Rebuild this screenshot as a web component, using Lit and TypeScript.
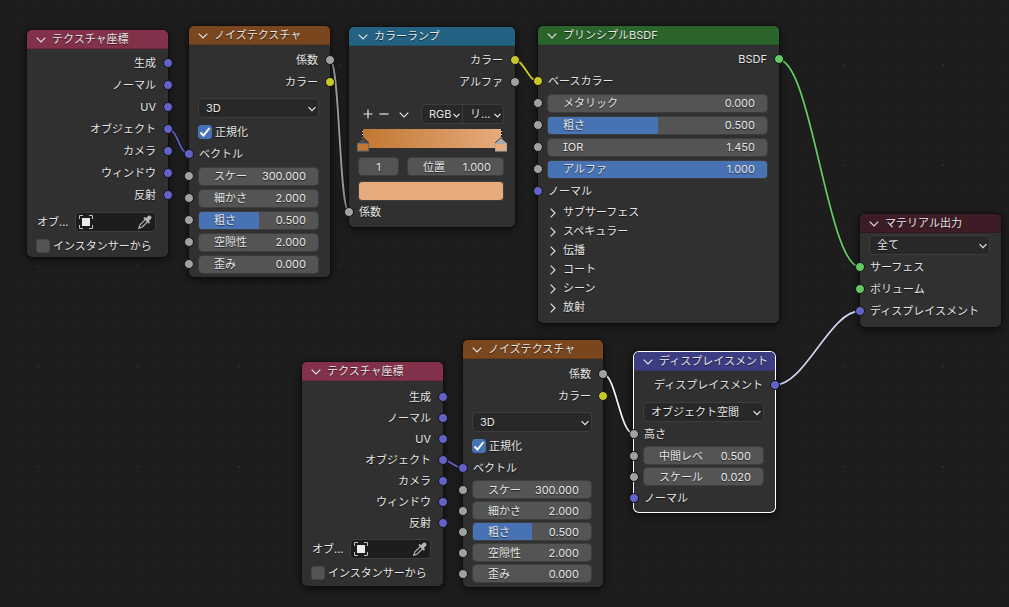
import { LitElement, html, svg, css } from "lit";
import { customElement, property } from "lit/decorators.js";

type Kind = "vector" | "value" | "color" | "shader";

const chevronDown = html`<svg class="chev" viewBox="0 0 10 10" aria-hidden="true"><path d="M.7 2.700L5 7l4.300-4.300" fill="none" stroke="currentColor" stroke-width="1.1" /></svg>`;
const chevronRight = html`<svg class="chev" viewBox="0 0 10 10" aria-hidden="true"><path d="M2.700.7L7 5 2.700 9.300" fill="none" stroke="currentColor" stroke-width="1.1" /></svg>`;

const shared = css`
  * { box-sizing: border-box; }
  :host {
    font-family: Inter, "Noto Sans CJK JP", sans-serif;
    font-feature-settings: "cv08";
    font-size: 11px;
    line-height: 16px;
    color: #e6e6e6;
    text-shadow: 0 1px 1px rgba(0, 0, 0, 0.6);
  }
  button, input, select {
    font: inherit;
    font-feature-settings: inherit;
    color: inherit;
    text-shadow: inherit;
    margin: 0;
    padding: 0;
    border: 0;
    background: none;
    min-width: 0;
    outline-offset: 1px;
  }
  .chev { width: 10px; height: 10px; flex: none; }
`;

@customElement("node-socket")
class NodeSocket extends LitElement {
  @property() kind: Kind = "value";
  @property() side: "in" | "out" = "in";
  static styles = css`
    .dot {
      position: absolute;
      top: 50%;
      width: 10px;
      height: 10px;
      margin: -5px;
      box-sizing: border-box;
      border: 1px solid #121212;
      border-radius: 50%;
    }
    .in { left: 0; }
    .out { right: 0; }
    .vector { background: #6363c7; }
    .value { background: #a1a1a1; }
    .color { background: #c7c729; }
    .shader { background: #63c763; }
  `;
  render() {
    return html`<span class="dot ${this.kind} ${this.side}"></span>`;
  }
}

@customElement("node-row")
class NodeRow extends LitElement {
  @property() label = "";
  @property() kind: Kind = "value";
  @property() side: "in" | "out" = "in";
  static styles = [shared, css`
    :host { display: block; }
    .row {
      position: relative;
      display: flex;
      align-items: center;
      height: var(--label-row, 22px);
      padding: 0 12px 0 10px;
    }
    .out { justify-content: flex-end; }
  `];
  render() {
    return html`<div class="row ${this.side}">
      <span>${this.label}</span>
      <node-socket .kind=${this.kind} .side=${this.side}></node-socket>
    </div>`;
  }
}

@customElement("node-field")
class NodeField extends LitElement {
  @property() label = "";
  @property() value = "";
  @property({ type: Number }) fill = 0;
  static styles = [shared, css`
    :host { display: block; }
    .row {
      position: relative;
      display: flex;
      align-items: center;
      height: var(--field-row, 22px);
      padding: 0 11px 0 9px;
    }
    .field {
      position: relative;
      flex: 1;
      min-width: 0;
      display: flex;
      align-items: center;
      height: 19px;
      padding: 0 12px 0 15px;
      border: 1px solid #3d3d3d;
      border-radius: 4px;
      background: #545454;
      background-clip: padding-box;
      overflow: hidden;
    }
    .bar { position: absolute; left: 0; top: 0; bottom: 0; background: #4772b3; }
    .name { position: relative; white-space: nowrap; }
    .value { position: relative; flex: 1; width: 0; text-align: right; }
  `];
  render() {
    return html`<div class="row">
      <label class="field">
        <span class="bar" style="width:${this.fill * 100}%"></span>
        <span class="name">${this.label}</span>
        <input class="value" type="text" inputmode="decimal" .value=${this.value} />
      </label>
      <node-socket kind="value" side="in"></node-socket>
    </div>`;
  }
}

@customElement("node-select")
class NodeSelect extends LitElement {
  @property() label = "";
  @property() value = "";
  static styles = [shared, css`
    :host { display: block; }
    .row { display: flex; align-items: center; height: 22px; padding: 0 11px 0 9px; }
    .box {
      flex: 1;
      min-width: 0;
      height: 20px;
      display: grid;
      align-items: center;
      border: 1px solid #3d3d3d;
      border-radius: 4px;
      background: #282828;
    }
    select {
      grid-area: 1 / 1;
      appearance: none;
      width: 100%;
      height: 18px;
      padding: 0 16px 0 7px;
    }
    .chev { grid-area: 1 / 1; justify-self: end; width: 8px; height: 8px; margin: 2px 2px 0 0; pointer-events: none; }
    .chev path { stroke-width: 1.6; }
  `];
  render() {
    return html`<div class="row"><span class="box">
      <select aria-label=${this.label}><option>${this.value}</option></select>${chevronDown}
    </span></div>`;
  }
}

@customElement("node-check")
class NodeCheck extends LitElement {
  @property() label = "";
  @property({ type: Boolean }) checked = false;
  static styles = [shared, css`
    :host { display: block; }
    .row { display: flex; align-items: center; gap: 3px; height: 22px; padding: 0 9px; white-space: nowrap; }
    .tick { display: grid; }
    input {
      grid-area: 1 / 1;
      appearance: none;
      width: 14px;
      height: 14px;
      border: 1px solid #464646;
      border-radius: 3px;
      background: #545454;
    }
    input:checked { background: #4772b3; border-color: #4772b3; }
    svg { grid-area: 1 / 1; width: 14px; height: 14px; visibility: hidden; pointer-events: none; }
    input:checked + svg { visibility: visible; }
  `];
  render() {
    return html`<label class="row">
      <span class="tick">
        <input type="checkbox" .checked=${this.checked} />
        <svg viewBox="0 0 14 14" aria-hidden="true"><path d="M2.500 7.500l3 3 6-7.500" fill="none" stroke="#fff" stroke-width="2" /></svg>
      </span>
      <span>${this.label}</span>
    </label>`;
  }
}

@customElement("graph-node")
class GraphNode extends LitElement {
  @property() label = "";
  @property() tone = "";
  @property({ type: Boolean }) selected = false;
  static styles = [shared, css`
    :host { display: block; }
    .node {
      border-radius: 5px;
      background: #303030;
      box-shadow: 0 0 0 1px rgba(14, 14, 14, 0.6), 0 2px 8px 1px rgba(0, 0, 0, 0.6);
    }
    .selected { box-shadow: 0 0 0 1px #fff, 0 2px 8px 2px rgba(0, 0, 0, 0.6); }
    header {
      display: flex;
      align-items: flex-start;
      height: 19px;
      border-radius: 5px 5px 0 0;
      box-shadow: inset 0 -1px rgba(0, 0, 0, 0.15);
    }
    .input { background: #83314a; }
    .texture { background: #79461d; }
    .converter { background: #246283; }
    .shader { background: #2b652b; }
    .output { background: #3d1c26; }
    .vector { background: #3c3c83; }
    button { display: flex; align-items: center; gap: 6px; height: 17px; padding: 0 9px; white-space: nowrap; }
    button .chev { margin-top: 2px; }
  `];
  render() {
    return html`<section class="node ${this.selected ? "selected" : ""}">
      <header class=${this.tone}><button type="button" aria-expanded="true">${chevronDown}<span>${this.label}</span></button></header>
      <slot></slot>
    </section>`;
  }
}

/* Background grid: a faint dot every 20 px, a brighter one every fifth. */
const dots: { x: number; y: number; major: boolean }[] = [];
const pitch = 20.13;
for (let i = -1; i < 49; i++) {
  for (let j = -3; j < 27; j++) {
    dots.push({ x: Math.round(36.5 + i * pitch), y: Math.round(63.5 + j * pitch), major: i % 5 === 0 && j % 5 === 0 });
  }
}

const links = [
  { d: "M168 129C178 129 179 154 189 154", c: "#6363c7" },
  { d: "M330 60C340 60 339 212 349 212", c: "#a1a1a1" },
  { d: "M515 60C524 60 528 81 538 81", c: "#d0d02c" },
  { d: "M779 60C811 60 828 267 860 267", c: "#63c763" },
  { d: "M775 385C805 385 830 311 860 311", c: "#d2d2ec" },
  { d: "M443 460C450 460 455 468 463 468", c: "#6363c7" },
  { d: "M603 374C616 374 620 434 634 434", c: "#f0f0f0" },
];

@customElement("app-root")
class AppRoot extends LitElement {
  static styles = [shared, css`
    :host { display: block; }
    main { position: relative; min-height: 100vh; overflow: hidden; background: #1d1d1d; }
    .wires { position: absolute; inset: 0; width: 100%; height: 100%; pointer-events: none; }
    graph-node { position: absolute; }
    .coords-a { left: 27px; top: 30px; width: 141px; --bottom: 0px; }
    .noise-a { left: 189px; top: 26px; width: 141px; --top: 4px; --bottom: 2px; }
    .ramp { left: 349px; top: 27px; width: 166px; --bottom: 4px; }
    .bsdf { left: 538px; top: 26px; width: 241px; --bottom: 7px; }
    .material { left: 860px; top: 214px; width: 141px; --top: 1px; --bottom: 5px; }
    .coords-b { left: 302px; top: 362px; width: 141px; --label-row: 21px; --top: 5px; --bottom: 2px; }
    .noise-b { left: 463px; top: 340px; width: 140px; --field-row: 21px; --top: 4px; }
    .disp { left: 634px; top: 352px; width: 141px; --field-row: 21px; --top: 3px; }
    .body { padding: var(--top, 3px) 0 var(--bottom, 3px); }
    .gap { height: 4px; }
    .disp .gap { height: 5px; }
    .gap.small { height: 2px; }
    .object { display: flex; align-items: center; height: 22px; margin-top: 5px; padding: 0 12px 0 10px; gap: 6px; white-space: nowrap; }
    .picker {
      flex: 1;
      display: flex;
      justify-content: space-between;
      align-items: center;
      height: 20px;
      padding: 0 3px;
      border: 1px solid #3d3d3d;
      border-radius: 4px;
      background: #1d1d1d;
    }
    .picker button { display: flex; }
    .picker svg { width: 14px; height: 14px; }
    .tools { display: flex; align-items: center; height: 20px; margin-top: 11px; padding: 0 11px; }
    .tools button { display: flex; width: 16px; justify-content: center; }
    .tools .more { margin: 2px 9px 0 4px; }
    .pair { flex: 1; display: flex; border: 1px solid #3d3d3d; border-radius: 4px; background: #282828; }
    .pair span { flex: 1; display: grid; align-items: center; }
    .pair span + span { border-left: 1px solid #3d3d3d; }
    .pair select { grid-area: 1 / 1; appearance: none; width: 100%; height: 18px; padding: 0 0 0 7px; }
    .pair .chev { grid-area: 1 / 1; justify-self: end; width: 7px; height: 7px; margin: 2px 2px 0 0; pointer-events: none; }
    .pair .chev path { stroke-width: 1.8; }
    .gradient { display: block; width: calc(100% - 16px); height: 24px; margin: 4px 8px 0; }
    .stop { display: flex; gap: 8px; margin-top: 5px; padding: 0 11px 0 9px; height: 19px; }
    .num, .pos { display: flex; align-items: center; border: 1px solid #3d3d3d; border-radius: 4px; background: #545454; }
    .num { width: 41px; text-align: center; }
    .pos { flex: 1; padding: 0 12px 0 15px; }
    .pos input { flex: 1; width: 0; text-align: right; }
    .swatch { display: block; width: calc(100% - 20px); height: 20px; margin: 5px 11px 0 9px; border: 1px solid #3d3d3d; border-radius: 4px; background: #e6ab7d; }
    .panel { display: flex; align-items: center; gap: 5px; height: 19px; padding: 0 9px 0 10px; }
    .panel .chev { margin-top: 2px; }
  `];

  private coords(cls: string) {
    const outs = ["生成", "ノーマル", "UV", "オブジェクト", "カメラ", "ウィンドウ", "反射"];
    return html`<graph-node class=${cls} label="テクスチャ座標" tone="input"><div class="body">
      ${outs.map((o) => html`<node-row label=${o} kind="vector" side="out"></node-row>`)}
      <div class="object"><span>オブ...</span>
        <div class="picker">
          <button type="button" aria-label="オブジェクト"><svg viewBox="0 0 14 14"><path d="M.5 4V.5H4M10 .5h3.500V4M13.500 10v3.500H10M4 13.500H.5V10" fill="none" stroke="#bdbdbd" /><path d="M3 3h8v8H3z" fill="#ebebeb" /></svg></button>
          <button type="button" aria-label="スポイト"><svg viewBox="0 0 14 14"><path d="M7.200 4.600L2 9.800.7 13.300 4.200 12l5.200-5.200" fill="none" stroke="#b4b4b4" stroke-width="1.200" /><path d="M5.300 3.300l1.300-1.300 1.600 1L10 1.100c1.900-1.900 4.800 1 2.900 2.900L11 5.800l1 1.600-1.300 1.300z" fill="#b4b4b4" /></svg></button>
        </div>
      </div>
      <div class="gap small"></div>
      <node-check label="インスタンサーから"></node-check>
    </div></graph-node>`;
  }

  private noise(cls: string) {
    return html`<graph-node class=${cls} label="ノイズテクスチャ" tone="texture"><div class="body">
      <node-row label="係数" side="out"></node-row>
      <node-row label="カラー" kind="color" side="out"></node-row>
      <div class="gap"></div>
      <node-select label="次元" value="3D"></node-select>
      <div class="gap small"></div>
      <node-check label="正規化" checked></node-check>
      <node-row label="ベクトル" kind="vector"></node-row>
      <node-field label="スケー" value="300.000"></node-field>
      <node-field label="細かさ" value="2.000"></node-field>
      <node-field label="粗さ" value="0.500" fill="0.5"></node-field>
      <node-field label="空隙性" value="2.000"></node-field>
      <node-field label="歪み" value="0.000"></node-field>
    </div></graph-node>`;
  }

  private ramp() {
    return html`<graph-node class="ramp" label="カラーランプ" tone="converter"><div class="body">
      <node-row label="カラー" kind="color" side="out"></node-row>
      <node-row label="アルファ" side="out"></node-row>
      <div class="tools">
        <button type="button" aria-label="追加"><svg class="chev" viewBox="0 0 10 10"><path d="M5 .5v9M.5 5h9" stroke="#e6e6e6" stroke-width="1.200" /></svg></button>
        <button type="button" aria-label="削除"><svg class="chev" viewBox="0 0 10 10"><path d="M.5 5h9" stroke="#e6e6e6" stroke-width="1.200" /></svg></button>
        <button type="button" class="more" aria-label="ツール">${chevronDown}</button>
        <div class="pair">
          <span><select aria-label="カラーモード"><option>RGB</option></select>${chevronDown}</span>
          <span><select aria-label="補間"><option>リ...</option></select>${chevronDown}</span>
        </div>
      </div>
      <svg class="gradient" viewBox="0 0 150 24" aria-hidden="true">
        <defs><linearGradient id="g"><stop offset="0" stop-color="#c27731" /><stop offset="1" stop-color="#e6ab7d" /></linearGradient></defs>
        <rect x="5" y="1" width="140" height="19" fill="url(#g)" />
        <path d="M5.500 1v9M144.500 1v9" stroke="#eee" />
        <path d="M5.500 1v9M144.500 1v9" stroke="#111" stroke-dasharray="2 1" />
        <path d="M.5 15.500V14.500L6 9.500l5.500 5v1z" fill="#4a4a4a" stroke="#1c1c1c" stroke-width=".8" />
        <rect x=".5" y="15.500" width="11" height="7.500" fill="#c27731" stroke="#6a6a6a" />
        <path d="M138.500 15.500V14.500L144 9.500l5.500 5v1z" fill="#a8a8a8" stroke="#1c1c1c" stroke-width=".8" />
        <rect x="138.500" y="15.500" width="11" height="7.500" fill="#e6ab7d" stroke="#aaa" />
      </svg>
      <div class="stop">
        <input class="num" type="text" aria-label="ストップ" value="1" />
        <label class="pos">位置<input type="text" value="1.000" /></label>
      </div>
      <button class="swatch" type="button" aria-label="カラー"></button>
      <node-row label="係数"></node-row>
    </div></graph-node>`;
  }

  render() {
    return html`<main>
      <svg class="wires" aria-hidden="true">
        ${dots.map((p) => p.major
          ? svg`<rect x=${p.x} y=${p.y} width="2" height="2" fill="#2a2a2a" />`
          : svg`<rect x=${p.x} y=${p.y} width="1" height="1" fill="#242424" />`)}
        ${links.map((l) => svg`<path d=${l.d} fill="none" stroke="#101010" stroke-opacity=".6" stroke-width="3.500" /><path d=${l.d} fill="none" stroke=${l.c} stroke-width="1.800" />`)}
      </svg>
      ${this.coords("coords-a")} ${this.noise("noise-a")} ${this.ramp()}
      <graph-node class="bsdf" label="プリンシプルBSDF" tone="shader"><div class="body">
        <node-row label="BSDF" kind="shader" side="out"></node-row>
        <node-row label="ベースカラー" kind="color"></node-row>
        <node-field label="メタリック" value="0.000"></node-field>
        <node-field label="粗さ" value="0.500" fill="0.5"></node-field>
        <node-field label="IOR" value="1.450"></node-field>
        <node-field label="アルファ" value="1.000" fill="1"></node-field>
        <node-row label="ノーマル" kind="vector"></node-row>
        ${["サブサーフェス", "スペキュラー", "伝播", "コート", "シーン", "放射"].map(
          (p) => html`<button type="button" class="panel" aria-expanded="false">${chevronRight}<span>${p}</span></button>`
        )}
      </div></graph-node>
      <graph-node class="material" label="マテリアル出力" tone="output"><div class="body">
        <node-select label="ターゲット" value="全て"></node-select>
        <node-row label="サーフェス" kind="shader"></node-row>
        <node-row label="ボリューム" kind="shader"></node-row>
        <node-row label="ディスプレイスメント" kind="vector"></node-row>
      </div></graph-node>
      ${this.coords("coords-b")} ${this.noise("noise-b")}
      <graph-node class="disp" label="ディスプレイスメント" tone="vector" selected><div class="body">
        <node-row label="ディスプレイスメント" kind="vector" side="out"></node-row>
        <div class="gap"></div>
        <node-select label="空間" value="オブジェクト空間"></node-select>
        <node-row label="高さ"></node-row>
        <node-field label="中間レベ" value="0.500"></node-field>
        <node-field label="スケール" value="0.020"></node-field>
        <node-row label="ノーマル" kind="vector"></node-row>
      </div></graph-node>
    </main>`;
  }
}
